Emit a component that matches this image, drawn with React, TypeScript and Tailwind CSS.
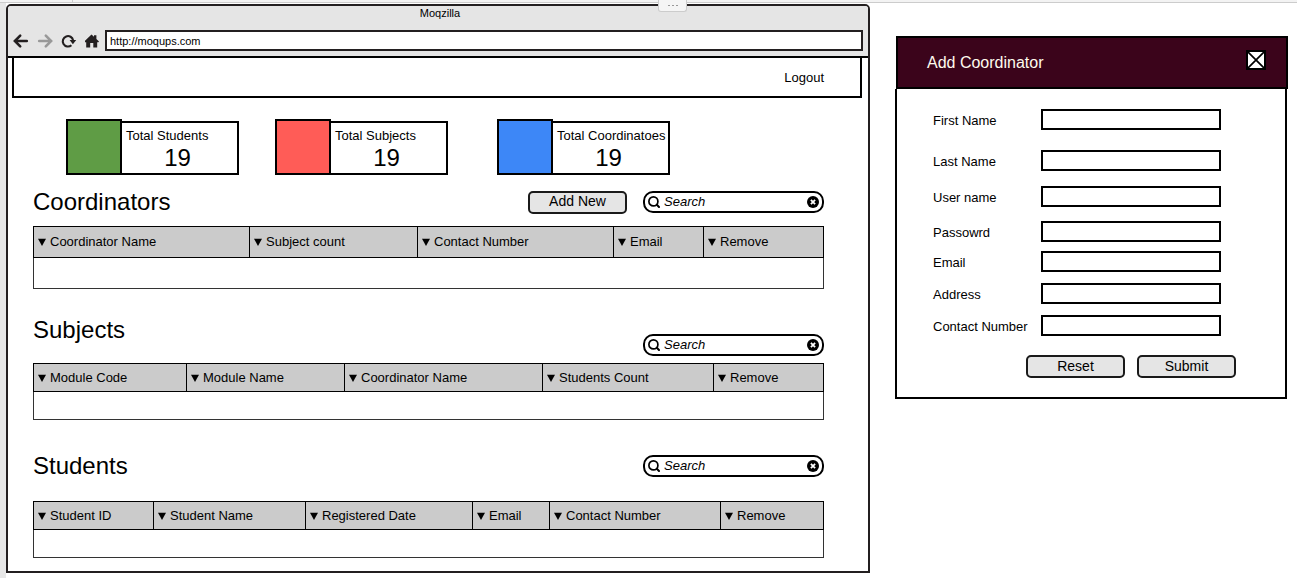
import React from "react";

type Column = { label: string; weight: number };

const stats = [
  { label: "Total Students", value: 19, color: "bg-[#5f9c45]" },
  { label: "Total Subjects", value: 19, color: "bg-[#ff5c57]" },
  { label: "Total Coordinatoes", value: 19, color: "bg-[#3d87f7]" },
];

const coordinatorColumns: Column[] = [
  { label: "Coordinator Name", weight: 216 },
  { label: "Subject count", weight: 168 },
  { label: "Contact Number", weight: 196 },
  { label: "Email", weight: 90 },
  { label: "Remove", weight: 120 },
];

const subjectColumns: Column[] = [
  { label: "Module Code", weight: 153 },
  { label: "Module Name", weight: 158 },
  { label: "Coordinator Name", weight: 198 },
  { label: "Students Count", weight: 171 },
  { label: "Remove", weight: 110 },
];

const studentColumns: Column[] = [
  { label: "Student ID", weight: 120 },
  { label: "Student Name", weight: 152 },
  { label: "Registered Date", weight: 167 },
  { label: "Email", weight: 77 },
  { label: "Contact Number", weight: 171 },
  { label: "Remove", weight: 103 },
];

const fields = [
  { id: "first-name", label: "First Name", type: "text" },
  { id: "last-name", label: "Last Name", type: "text" },
  { id: "user-name", label: "User name", type: "text" },
  { id: "password", label: "Passowrd", type: "password" },
  { id: "email", label: "Email", type: "email" },
  { id: "address", label: "Address", type: "text" },
  { id: "contact-number", label: "Contact Number", type: "tel" },
];

function ArrowIcon({ className }: { className: string }) {
  return (
    <svg viewBox="0 0 16 16" className={className} fill="none" stroke="currentColor" strokeWidth="2.6" aria-hidden="true">
      <path d="M13.8 8H2.5" strokeLinecap="round" />
      <path d="M7.2 2.6 1.9 8l5.3 5.4" strokeLinecap="round" />
    </svg>
  );
}

function ReloadIcon() {
  return (
    <svg viewBox="0 0 16 16" className="size-4" aria-hidden="true">
      <path d="M10.4 12.2A5.2 5.2 0 1 1 12.1 7.4" fill="none" stroke="currentColor" strokeWidth="2.1" />
      <path d="M8.6 6.9h6.6L11.9 11.2Z" fill="currentColor" />
    </svg>
  );
}

function HomeIcon() {
  return (
    <svg viewBox="0 0 14 16" className="h-4 w-3.5" fill="currentColor" aria-hidden="true">
      <path d="M6.5 1.5 9 3.8V2.2h2.4v3.9L14 8.4l-.6.8h-1.2v5.2H8.3V9.9H5.2v4.5H1.2V9.2H0L-.6 8.4Z" />
    </svg>
  );
}

function GrayButton({ children, type = "button" }: { children: React.ReactNode; type?: "button" | "submit" | "reset" }) {
  return (
    <button
      type={type}
      className="flex h-[23px] w-[99px] items-center justify-center rounded-[5px] border-2 border-[#1a1a1a] bg-[#e5e5e5] pb-0.5 text-sm leading-4"
    >
      {children}
    </button>
  );
}

function SearchBox({ label }: { label: string }) {
  return (
    <div className="flex h-[22px] w-[181px] items-center rounded-[10px] border-2 border-black bg-white px-[3px]">
      <svg viewBox="0 0 12 12" className="size-3 shrink-0" fill="none" stroke="currentColor" aria-hidden="true">
        <circle cx="5.4" cy="5.4" r="4.5" strokeWidth="1.7" />
        <path d="m8.8 8.8 2.2 2.2" strokeWidth="2" strokeLinecap="round" />
      </svg>
      <input
        type="text"
        aria-label={label}
        placeholder="Search"
        className="ml-1 min-w-0 flex-1 bg-transparent text-[13px] leading-4 italic outline-none placeholder:text-black"
      />
      <button type="button" aria-label="Clear search" className="shrink-0">
        <svg viewBox="0 0 12 12" className="size-3" aria-hidden="true">
          <circle cx="6" cy="6" r="6" fill="black" />
          <path d="m3.9 3.9 4.2 4.2M8.1 3.9 3.9 8.1" stroke="white" strokeWidth="1.8" />
        </svg>
      </button>
    </div>
  );
}

function DataTable({ columns, label, rowClass }: { columns: Column[]; label: string; rowClass: string }) {
  const total = columns.reduce((sum, column) => sum + column.weight, 0);
  return (
    <table aria-label={label} className="w-full table-fixed border-collapse border border-[#333]">
      <colgroup>
        {columns.map((column) => (
          <col key={column.label} style={{ width: `${(column.weight / total) * 100}%` }} />
        ))}
      </colgroup>
      <thead>
        <tr className={rowClass}>
          {columns.map((column) => (
            <th key={column.label} className="border border-black bg-[#cbcbcb] p-0 font-normal">
              <button type="button" className="flex w-full items-center gap-1 pl-1 text-left text-[13px] leading-4 whitespace-nowrap">
                <svg viewBox="0 0 8 8" className="size-2 shrink-0" aria-hidden="true">
                  <path d="M0 .8h8L4 8Z" fill="black" />
                </svg>
                {column.label}
              </button>
            </th>
          ))}
        </tr>
      </thead>
      <tbody>
        <tr className={rowClass}>
          <td colSpan={columns.length} className="p-0" />
        </tr>
      </tbody>
    </table>
  );
}

function BrowserBar() {
  return (
    <header className="border-b-2 border-black bg-[#e5e5e5] px-[5px] pb-[5px]">
      <p className="pl-1 text-center text-[11px] leading-[14px]">Moqzilla</p>
      <div className="mt-2.5 flex items-center gap-1.5 text-[#231f20]">
        <nav aria-label="Browser" className="flex items-center gap-2">
          <button type="button" aria-label="Back"><ArrowIcon className="size-4" /></button>
          <button type="button" aria-label="Forward" className="text-[#999]"><ArrowIcon className="size-4 rotate-180" /></button>
          <button type="button" aria-label="Reload"><ReloadIcon /></button>
          <button type="button" aria-label="Home"><HomeIcon /></button>
        </nav>
        <input
          type="text"
          aria-label="Web address"
          defaultValue="http://moqups.com"
          className="h-[21px] min-w-0 flex-1 border-2 border-[#231f20] bg-white px-[3px] text-[11px] leading-4 text-black outline-none"
        />
      </div>
    </header>
  );
}

function BrowserWindow() {
  return (
    <div className="mt-px min-w-0 flex-1 self-start overflow-hidden rounded-t-[5px] border-2 border-[#231f20] bg-white">
      <BrowserBar />
      <nav aria-label="Account" className="mr-1.5 ml-1 flex h-10 items-center justify-end border-x-2 border-b-2 border-black pt-0.5 pr-9">
        <a href="#logout" className="text-[13px] leading-4">Logout</a>
      </nav>
      <main className="pt-[21px] pr-11 pb-[13px] pl-[25px]">
        <div className="grid grid-cols-[209px_222px_173px] pl-[33px]">
          {stats.map((stat) => (
            <div key={stat.label} className="flex w-[173px] items-end">
              <div className={`size-14 shrink-0 border-2 border-black ${stat.color}`} />
              <div className="h-[54px] flex-1 border-2 border-l-0 border-black pt-[5px] pl-1 whitespace-nowrap">
                <p className="text-[13px] leading-4">{stat.label}</p>
                <p className="pr-2 text-center text-2xl leading-7">{stat.value}</p>
              </div>
            </div>
          ))}
        </div>

        <section className="mt-[15px]">
          <div className="mb-3 flex h-6 items-center">
            <h2 className="flex-1 text-2xl leading-7">Coordinators</h2>
            <div className="flex items-center gap-4">
              <GrayButton>Add New</GrayButton>
              <SearchBox label="Search coordinators" />
            </div>
          </div>
          <DataTable columns={coordinatorColumns} label="Coordinators" rowClass="h-[31px]" />
        </section>

        <section className="mt-[27px]">
          <div className="mb-[7px] flex h-10 items-end justify-between">
            <h2 className="self-start text-2xl leading-7">Subjects</h2>
            <SearchBox label="Search subjects" />
          </div>
          <DataTable columns={subjectColumns} label="Subjects" rowClass="h-[28px]" />
        </section>

        <section className="mt-[34px]">
          <div className="mb-[23px] flex h-6 items-center justify-between">
            <h2 className="text-2xl leading-7">Students</h2>
            <SearchBox label="Search students" />
          </div>
          <DataTable columns={studentColumns} label="Students" rowClass="h-[28px]" />
        </section>
      </main>
    </div>
  );
}

function CoordinatorDialog() {
  return (
    <section aria-labelledby="dialog-title" className="mt-[33px] w-[393px] shrink-0 self-start">
      <header className="ml-px flex h-[53px] items-center justify-between border-2 border-black bg-[#3b041b] pr-5 pl-[29px]">
        <h2 id="dialog-title" className="text-base leading-5 text-[#fffbee]">Add Coordinator</h2>
        <button type="button" aria-label="Close" className="mb-1.5 size-5 border-2 border-black bg-white">
          <svg viewBox="0 0 16 16" className="size-4" aria-hidden="true">
            <path d="m0 0 16 16M16 0 0 16" stroke="black" strokeWidth="1.7" />
          </svg>
        </button>
      </header>
      <form className="mr-px border-2 border-t-0 border-black bg-white pt-2 pb-[19px] pl-9" onSubmit={(event) => event.preventDefault()}>
        <div className="grid grid-rows-[44px_38px_34px_36px_24px_40px_24px]">
          {fields.map((field) => (
            <div key={field.id} className="flex items-center">
              <label htmlFor={field.id} className="w-[108px] pt-[3px] text-[13px] leading-4">{field.label}</label>
              <input id={field.id} type={field.type} className="h-[21px] w-[180px] border-2 border-black bg-white px-1 text-[13px] outline-none" />
            </div>
          ))}
        </div>
        <div className="mt-[18px] ml-[93px] flex gap-3">
          <GrayButton type="reset">Reset</GrayButton>
          <GrayButton type="submit">Submit</GrayButton>
        </div>
      </form>
    </section>
  );
}

export default function App() {
  return (
    <div className="relative flex min-h-screen flex-col bg-white font-['Liberation_Sans',Arial,sans-serif] text-black">
      <div className="flex h-[3px] border-b border-[#ccc] bg-[#f3f3f3]">
        <div className="w-[73px] border-r border-[#ccc]" />
      </div>
      <div className="flex flex-1 pr-[9px]">
        <div className="w-1.5 shrink-0 bg-[#e7e7e7]" />
        <BrowserWindow />
        <div className="w-[25px] shrink-0" />
        <CoordinatorDialog />
      </div>
      <button
        type="button"
        aria-label="Show toolbar"
        className="absolute top-0 left-[658px] flex h-3 w-[29px] items-center justify-center gap-0.5 rounded-b-[3px] border border-t-0 border-[#ccc] bg-[#f5f5f5]"
      >
        <span className="h-px w-0.5 bg-[#999]" />
        <span className="h-px w-0.5 bg-[#999]" />
        <span className="h-px w-0.5 bg-[#999]" />
      </button>
    </div>
  );
}
